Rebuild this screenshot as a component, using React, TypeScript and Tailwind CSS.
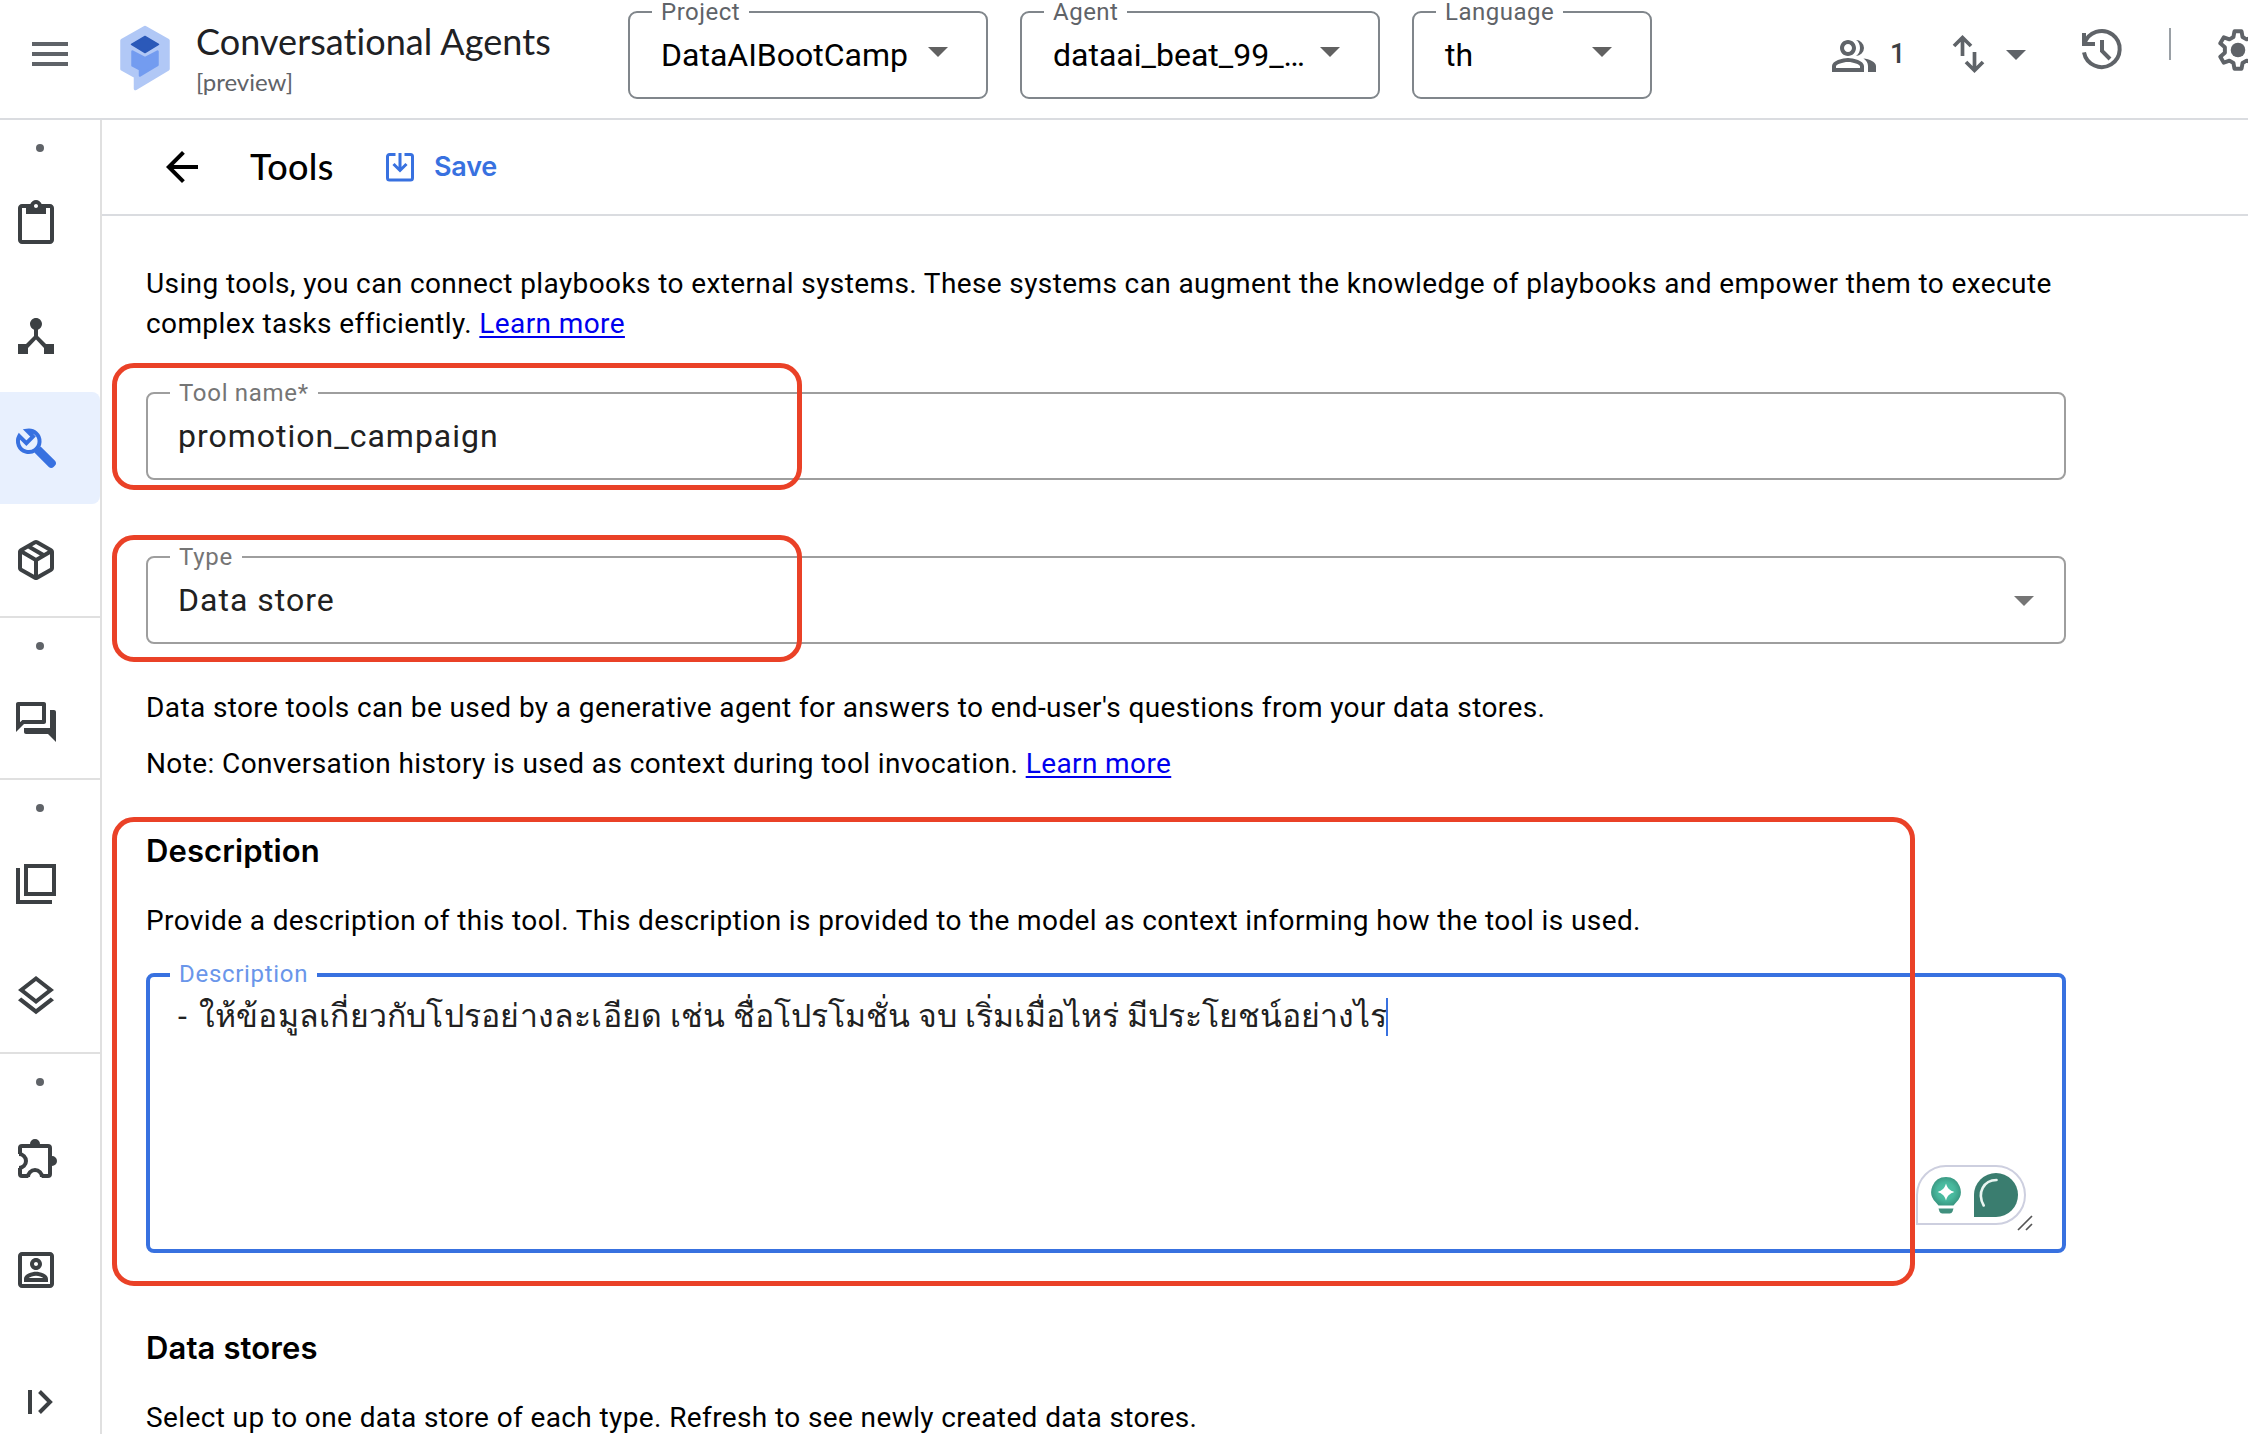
import type { ReactNode } from "react";

function Icon({ size = 48, className = "", children }: { size?: number; className?: string; children: ReactNode }) {
  return (
    <svg width={size} height={size} viewBox="0 0 24 24" fill="currentColor" className={`block shrink-0 ${className}`}>
      {children}
    </svg>
  );
}

const Clipboard = (
  <path d="M19 2h-4.18C14.4.84 13.3 0 12 0c-1.3 0-2.4.84-2.82 2H5c-1.1 0-2 .9-2 2v16c0 1.1.9 2 2 2h14c1.1 0 2-.9 2-2V4c0-1.1-.9-2-2-2zm-7 0c.55 0 1 .45 1 1s-.45 1-1 1-1-.45-1-1 .45-1 1-1zm7 18H5V4h2v3h10V4h2v16z" />
);

const Hub = (
  <path d="M17 16l-4-4V8.82C14.16 8.4 15 7.3 15 6c0-1.66-1.34-3-3-3S9 4.34 9 6c0 1.3.84 2.4 2 2.82V12l-4 4H3v5h5v-3.05l4-4.2 4 4.2V21h5v-5h-4z" />
);

const Wrench = (
  <>
    <path
      d="M3.64 6.04 7.2 9.6l3.300-3.300-3-3A5.400 5.400 0 1 1 3.64 6.04z"
      fill="none"
      stroke="currentColor"
      strokeWidth="2"
    />
    <path d="M14.300 11.200l7.200 7.200c.7.700.7 1.700 0 2.400l-.7.7c-.7.7-1.700.7-2.400 0l-7.200-7.200z" />
  </>
);

const Cube = (
  <path
    transform="translate(0 24) scale(0.025)"
    d="M440-183v-274L200-596v274l240 139Zm80 0 240-139v-274L520-457v274Zm-80 92L160-252q-19-11-29.500-29T120-321v-318q0-22 10.500-40t29.500-29l280-161q19-11 40-11t40 11l280 161q19 11 29.500 29t10.500 40v318q0 22-10.500 40T800-252L520-91q-19 11-40 11t-40-11Zm200-528 77-44-237-137-78 45 238 136Zm-160 93 78-45-237-137-78 45 237 137Z"
  />
);

const Forum = (
  <path d="M15 4v7H5.17L4 12.17V4h11m1-2H3c-.55 0-1 .45-1 1v14l4-4h10c.55 0 1-.45 1-1V3c0-.55-.45-1-1-1zm5 4h-2v9H6v2c0 .55.45 1 1 1h11l4 4V7c0-.55-.45-1-1-1z" />
);

const Copies = <path d="M6 2h16v16H6zM8 4v12h12V4zM2 4h2v16h16v2H2z" fillRule="evenodd" />;

const Layers = (
  <path d="M11.99 18.54l-7.37-5.73L3 14.07l9 7 9-7-1.63-1.27zM12 16l7.36-5.73L21 9l-9-7-9 7 1.63 1.27L12 16zm0-11.47L17.74 9 12 13.47 6.26 9 12 4.53z" />
);

const Puzzle = (
  <>
    <path
      d="M3.5 10A3.5 3.5 0 0 1 3.5 17M8 21.5a3.5 3.5 0 0 1 7 0M4 10V7a1 1 0 0 1 1-1h13a1 1 0 0 1 1 1v13a1 1 0 0 1-1 1h-3.2M8.2 21H5a1 1 0 0 1-1-1v-3"
      fill="none"
      stroke="currentColor"
      strokeWidth="2"
    />
    <path d="M9 5a2.5 2.5 0 0 1 5 0v1H9zM20 11a2.5 2.5 0 0 1 0 5h-1v-5z" />
  </>
);

const Portrait = (
  <path d="M19 3H5c-1.11 0-2 .9-2 2v14c0 1.1.89 2 2 2h14c1.1 0 2-.9 2-2V5c0-1.1-.9-2-2-2zm0 16H5V5h14v14zM12 12c1.65 0 3-1.35 3-3s-1.35-3-3-3-3 1.35-3 3 1.35 3 3 3zm0-4c.55 0 1 .45 1 1s-.45 1-1 1-1-.45-1-1 .45-1 1-1zm6 10v-1.53c0-2.5-3.97-3.58-6-3.58s-6 1.08-6 3.58V18h12zm-9.69-2c.69-.56 2.38-1.12 3.69-1.12s3.01.56 3.69 1.12H8.31z" />
);

function Caret({ className = "" }: { className?: string }) {
  return (
    <svg width="20" height="10" viewBox="0 0 20 10" className={`block shrink-0 ${className}`}>
      <path d="M0 0h20L10 10z" fill="currentColor" />
    </svg>
  );
}

function Logo() {
  return (
    <svg width="50" height="66" viewBox="0 0 50 66" className="mt-[25px] block shrink-0">
      <path
        d="M25 2.500 48 15.500V44L15.500 63.500V51.500L2 44V15.500z"
        fill="#b1c8f6"
        stroke="#b1c8f6"
        strokeWidth="3.500"
        strokeLinejoin="round"
      />
      <path
        d="M12.500 26.500 25 33l12.500-6.500V40L20 50.500V44.500L12.500 40.500z"
        fill="#739cf0"
        stroke="#739cf0"
        strokeWidth="2.500"
        strokeLinejoin="round"
      />
      <path
        d="M25 11.500 38.500 19.300 25 27.500 11.500 19.300z"
        fill="#2b59b9"
        stroke="#2b59b9"
        strokeWidth="1.500"
        strokeLinejoin="round"
      />
    </svg>
  );
}

function HeaderSelect({ label, value, className }: { label: string; value: string; className: string }) {
  return (
    <div
      className={`relative mt-[11px] flex h-[88px] shrink-0 items-center justify-between rounded-[9px] border-2 border-[#80868b] pl-[31px] pr-[38px] ${className}`}
    >
      <span className="absolute left-[22px] top-[-13px] bg-white px-[9px] text-[24px] leading-[24px] tracking-[0.5px] text-[#5f6368]">
        {label}
      </span>
      <span className="whitespace-nowrap text-[32px] leading-[40px] text-black">{value}</span>
      <Caret className="-mt-[6px] text-[#616161]" />
    </div>
  );
}

function NavItem({ active = false, children }: { active?: boolean; children: ReactNode }) {
  return (
    <div
      className={
        active
          ? "flex h-[112px] w-[100px] items-center rounded-r-lg bg-[#e8f0fe] pl-3 text-[#3871e0]"
          : "flex h-[112px] w-[100px] items-center pl-3 text-[#3c4043]"
      }
    >
      <Icon>{children}</Icon>
    </div>
  );
}

function NavGroup({ last = false, children }: { last?: boolean; children: ReactNode }) {
  return (
    <div className={last ? "" : "border-b-2 border-[#e0e0e0]"}>
      <div className="flex h-12 items-start pl-9 pt-6">
        <span className="size-2 rounded-full bg-[#5f6368]" />
      </div>
      {children}
    </div>
  );
}

function Sidebar() {
  return (
    <nav className="flex w-[102px] shrink-0 flex-col border-r-2 border-[#e0e0e0]">
      <NavGroup>
        <NavItem>{Clipboard}</NavItem>
        <NavItem>{Hub}</NavItem>
        <NavItem active>{Wrench}</NavItem>
        <NavItem>{Cube}</NavItem>
      </NavGroup>
      <NavGroup>
        <NavItem>{Forum}</NavItem>
      </NavGroup>
      <NavGroup>
        <NavItem>{Copies}</NavItem>
        <NavItem>{Layers}</NavItem>
      </NavGroup>
      <NavGroup last>
        <NavItem>{Puzzle}</NavItem>
        <NavItem>{Portrait}</NavItem>
      </NavGroup>
      <svg width="26" height="26" viewBox="0 0 26 26" className="ml-7 mt-[63px] block text-[#3c4043]">
        <path d="M0 1h4v24H0z" fill="currentColor" />
        <path d="M11.500 2.500 22 13 11.500 23.500" fill="none" stroke="currentColor" strokeWidth="4" />
      </svg>
    </nav>
  );
}

function Header() {
  return (
    <header className="flex h-[120px] shrink-0 items-start border-b-2 border-[#dadce0] bg-white">
      <Icon className="ml-[26px] mt-[30px] text-[#5f6368]">
        <path d="M3 18h18v-2H3v2zm0-5h18v-2H3v2zm0-7v2h18V6H3z" />
      </Icon>
      <div className="ml-[46px] shrink-0">
        <Logo />
      </div>
      <div className="ml-[26px] mt-[19px] w-[432px] shrink-0 font-['Lato',sans-serif]">
        <div className="whitespace-nowrap text-[36px] leading-[44px] tracking-[0.05px] text-[#202124]">Conversational Agents</div>
        <div className="mt-[3px] text-[24px] leading-[32px] text-[#5f6368]">[preview]</div>
      </div>
      <HeaderSelect label="Project" value="DataAIBootCamp" className="w-[360px]" />
      <HeaderSelect label="Agent" value="dataai_beat_99_…" className="ml-8 w-[360px]" />
      <HeaderSelect label="Language" value="th" className="ml-8 w-[240px]" />

      <Icon className="ml-[178px] mt-[32px] text-[#5f6368]">
        <path
          fillRule="evenodd"
          d="M9 12c2.210 0 4-1.790 4-4s-1.790-4-4-4-4 1.790-4 4 1.790 4 4 4zm0-6c1.100 0 2 .9 2 2s-.9 2-2 2-2-.9-2-2 .9-2 2-2zM9 13c-2.670 0-8 1.340-8 4v3h16v-3c0-2.660-5.330-4-8-4zm6 5H3v-.99C3.200 16.290 6.300 15 9 15s5.800 1.290 6 2v1zM13.030 4.050C14.240 4.780 15 6.300 15 8s-.76 3.220-1.970 3.950A4 4 0 0 0 17 8a4 4 0 0 0-3.970-3.950zM16.700 13.200C18.100 14.050 19 15.300 19 17v3h4v-3c0-2.200-3.300-3.500-6.300-3.800z"
        />
      </Icon>
      <span className="ml-[12px] mt-[33px] w-[16px] shrink-0 text-[27px] leading-[42px] font-medium text-[#3c4043]">1</span>
      <svg width="34" height="42" viewBox="0 0 34 42" className="ml-[46px] mt-[33px] block shrink-0 text-[#5f6368]">
        <g fill="none" stroke="currentColor" strokeWidth="3.700">
          <path d="M10.500 23V4M2 13 10.500 4.500 19 13" />
          <path d="M22.500 19V38M14 29 22.500 37.500 31 29" />
        </g>
      </svg>
      <Caret className="ml-[20px] mt-[50px] text-[#5f6368]" />
      <Icon className="ml-[52px] mt-[26px] text-[#5f6368]">
        <path
          d="M3 3.500V9h5.500M3.200 9A9 9 0 1 1 3 13.200M12 7v5.500l4 4"
          fill="none"
          stroke="currentColor"
          strokeWidth="2"
        />
      </Icon>
      <div className="ml-[43px] mt-[28px] h-8 w-0.5 shrink-0 bg-[#9aa0a6]" />
      <Icon size={50} className="ml-[42px] mt-[25px] text-[#5f6368]">
        <path
          fill="none"
          stroke="currentColor"
          strokeWidth="1.900"
          strokeLinejoin="round"
          d="M10.300 3h3.400l.5 2.800 1.900 1.100 2.700-1 1.700 2.900-2.200 1.900v2.600l2.200 1.900-1.700 2.900-2.700-1-1.900 1.100-.5 2.800h-3.400l-.5-2.800-1.900-1.100-2.700 1-1.700-2.900 2.200-1.900v-2.600L3.500 8.800l1.700-2.900 2.700 1 1.900-1.100z"
        />
        <circle cx="12" cy="12" r="3.500" />
      </Icon>
    </header>
  );
}

function Toolbar() {
  return (
    <div className="flex h-24 shrink-0 items-center border-b-2 border-[#dadce0] pl-[56px]">
      <Icon className="text-black">
        <path d="M20 11H7.830l5.590-5.590L12 4l-8 8 8 8 1.410-1.410L7.830 13H20v-2z" />
      </Icon>
      <span className="-mt-[3px] ml-[44px] w-[136px] font-['Lato',sans-serif] text-[36px] leading-[44px] font-medium tracking-[0.3px] text-black">
        Tools
      </span>
      <svg width="28" height="30" viewBox="0 0 28 30" className="-mt-px block shrink-0 text-[#3871e0]">
        <g fill="none" stroke="currentColor" strokeWidth="3">
          <path d="M9.500 2.500H3.500a2 2 0 0 0-2 2V26a2 2 0 0 0 2 2h21a2 2 0 0 0 2-2V4.500a2 2 0 0 0-2-2H18.500" />
          <path d="M14 1V18M7.500 12l6.500 6.500 6.500-6.500" />
        </g>
      </svg>
      <span className="ml-[20px] font-['Inter',sans-serif] text-[27px] leading-[40px] font-semibold tracking-[-0.2px] text-[#3871e0]">
        Save
      </span>
    </div>
  );
}

function Highlight({ className }: { className: string }) {
  return <div className={`pointer-events-none absolute z-10 rounded-[22px] border-[5px] border-[#ea4127] ${className}`} />;
}

function FieldLabel({ className, children }: { className: string; children: ReactNode }) {
  return (
    <span className={`absolute bg-white px-[9px] text-[24px] leading-[28px] tracking-[0.7px] ${className}`}>{children}</span>
  );
}

function LearnMore() {
  return (
    <a href="#" className="text-[#0000ee] underline decoration-2 underline-offset-[3px]">
      Learn more
    </a>
  );
}

function Assistant() {
  return (
    <div className="absolute bottom-[24px] right-[36px] z-20 flex h-[60px] w-[110px] items-center rounded-t-[30px] rounded-br-[30px] border-2 border-[#cdcfdf] bg-white pl-[12px]">
      <svg width="32" height="38" viewBox="0 0 32 38" className="block">
        <defs>
          <radialGradient id="bulb">
            <stop offset="0" stopColor="#4fc3a8" />
            <stop offset="0.6" stopColor="#48b89d" />
            <stop offset="1" stopColor="#3b9a84" />
          </radialGradient>
        </defs>
        <path d="M16 1a14.700 14.700 0 0 0-10.500 25L8.500 29.500h15L26.500 26A14.700 14.700 0 0 0 16 1z" fill="url(#bulb)" />
        <path
          d="M16 7.500c1.500 4.800 3.600 6.900 8.300 8.500-4.700 1.600-6.800 3.700-8.300 8.500-1.500-4.800-3.600-6.900-8.300-8.500 4.700-1.600 6.800-3.700 8.300-8.500z"
          fill="#fff"
        />
        <path d="M8.500 32.500h15l-1 3a3 3 0 0 1-2.800 2h-7.400a3 3 0 0 1-2.800-2z" fill="#40907e" />
      </svg>
      <svg width="44" height="44" viewBox="0 0 44 44" className="-mt-px ml-[12px] block">
        <path d="M0 44V22A22 22 0 1 1 22 44z" fill="#3a7d6f" />
        <path d="M22.500 7C10 7 2.500 19.500 9.700 32.500" fill="none" stroke="#e9f5f1" strokeWidth="2.600" strokeLinecap="round" />
      </svg>
    </div>
  );
}

function Content() {
  return (
    <main className="w-[2010px] pl-[44px] pt-12 text-[28px] leading-[40px] tracking-[0.39px] text-black">
      <div className="w-[1920px]">
        <p>
          Using tools, you can connect playbooks to external systems. These systems can augment the knowledge of playbooks and
          empower them to execute complex tasks efficiently. <LearnMore />
        </p>

        <div className="relative mt-12 flex h-[88px] items-center rounded-[8px] border-2 border-[#9e9e9e] pl-[30px]">
          <FieldLabel className="left-[22px] top-[-15px] text-[#757575]">Tool name*</FieldLabel>
          <span className="text-[32px] tracking-[1px] text-[#212121]">promotion_campaign</span>
          <Highlight className="-left-[36px] -top-[31px] h-[127px] w-[690px]" />
        </div>

        <div className="relative mt-[76px] flex h-[88px] items-center justify-between rounded-[8px] border-2 border-[#9e9e9e] px-[30px]">
          <FieldLabel className="left-[22px] top-[-15px] text-[#757575]">Type</FieldLabel>
          <span className="text-[32px] tracking-[1px] text-[#212121]">Data store</span>
          <Caret className="mt-px text-[#757575]" />
          <Highlight className="-left-[36px] -top-[23px] h-[127px] w-[690px]" />
        </div>

        <p className="mt-[44px]">Data store tools can be used by a generative agent for answers to end-user's questions from your data stores.</p>
        <p className="mt-4">
          Note: Conversation history is used as context during tool invocation. <LearnMore />
        </p>

        <section className="relative mt-[47px]">
          <Highlight className="-left-[34px] -top-[14px] h-[469px] w-[1803px]" />
          <h2 className="font-['Inter',sans-serif] text-[31px] font-semibold tracking-[0.1px]">Description</h2>
          <p className="mt-[30px]">
            Provide a description of this tool. This description is provided to the model as context informing how the tool is used.
          </p>
          <div className="relative mt-8 flex h-[280px] rounded-[8px] border-4 border-[#3871e0] pl-[28px] pt-[20px]">
            <FieldLabel className="left-[20px] top-[-17px] text-[#6a96ea]">Description</FieldLabel>
            <span className="whitespace-nowrap text-[32px] leading-[38px] tracking-normal text-[#212121]">
              <span className="tracking-[2px]">- </span>
              <span className="tracking-[0.22px]">ให้ข้อมูลเกี่ยวกับโปรอย่างละเอียด</span> เช่น ชื่อโปรโมชั่น จบ เริ่มเมื่อไหร่ มีประโยชน์อย่างไร
            </span>
            <span className="-ml-px mt-px h-[38px] w-0.5 bg-[#3871e0]" />
            <Assistant />
            <svg width="16" height="16" viewBox="0 0 16 16" className="absolute bottom-[18px] right-[29px] z-20 block">
              <path d="M1 15 15 1M9 15l6-6" fill="none" stroke="#555" strokeWidth="1.700" />
            </svg>
          </div>
        </section>

        <h2 className="mt-[75px] font-['Inter',sans-serif] text-[31px] font-semibold tracking-[0.1px]">Data stores</h2>
        <p className="mt-[30px]">Select up to one data store of each type. Refresh to see newly created data stores.</p>
      </div>
    </main>
  );
}

export default function App() {
  return (
    <div className="flex h-[1434px] w-[2248px] flex-col overflow-hidden bg-white font-['Roboto','Noto_Sans',sans-serif]">
      <Header />
      <div className="flex min-h-0 flex-1">
        <Sidebar />
        <div className="flex min-w-0 flex-1 flex-col">
          <Toolbar />
          <Content />
        </div>
      </div>
    </div>
  );
}
